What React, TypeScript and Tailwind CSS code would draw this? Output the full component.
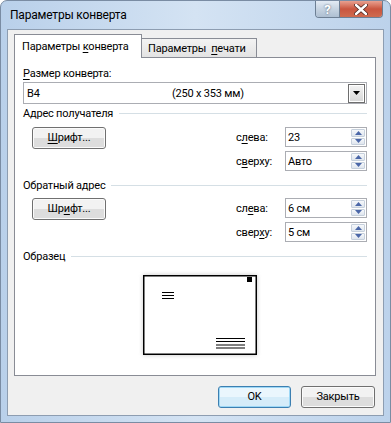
import React from "react";

const font = { fontFamily: 'Roboto, "Noto Sans", sans-serif' };

function U({ children }: { children: React.ReactNode }) {
  return <span className="underline underline-offset-2 decoration-1">{children}</span>;
}

function Spin({ value }: { value: string }) {
  return (
    <div className="flex h-[20px] w-[82px] items-stretch border border-[#abadb3] bg-white">
      <div className="flex flex-1 items-center pl-[2px] text-[11px] leading-none text-black">{value}</div>
      <div className="my-[1px] mr-[1px] flex w-[14px] flex-col gap-[1px]">
        <div className="flex flex-1 items-center justify-center rounded-[1px] border border-[#c6d0dc] bg-gradient-to-b from-[#f6f8fb] to-[#dfe6ee]">
          <svg width="7" height="4" viewBox="0 0 7 4"><path d="M0 4 L3.5 0 L7 4 Z" fill="#4b67a8" /></svg>
        </div>
        <div className="flex flex-1 items-center justify-center rounded-[1px] border border-[#c6d0dc] bg-gradient-to-b from-[#f6f8fb] to-[#dfe6ee]">
          <svg width="7" height="4" viewBox="0 0 7 4"><path d="M0 0 L7 0 L3.5 4 Z" fill="#4b67a8" /></svg>
        </div>
      </div>
    </div>
  );
}

function Btn({ children, w, focused }: { children: React.ReactNode; w: number; focused?: boolean }) {
  return (
    <div
      className={
        "relative flex h-[22px] items-center justify-center overflow-hidden rounded-[3px] border text-[11px] text-black " +
        (focused ? "border-[#3c7fb1] shadow-[inset_0_0_0_1px_#9ed8f6]" : "border-[#707070] shadow-[inset_0_0_0_1px_#fbfbfb]")
      }
      style={{ width: w }}
    >
      <div className="absolute inset-[1px] flex flex-col">
        <div className={"flex-1 " + (focused ? "bg-[#eaf6fd]" : "bg-[#f2f2f2]")} />
        <div className={"flex-1 " + (focused ? "bg-[#d5ecf9]" : "bg-[#dddddd]")} />
      </div>
      <span className="relative whitespace-nowrap">{children}</span>
    </div>
  );
}

function GroupHeader({ label, mt }: { label: string; mt: number }) {
  return (
    <div className="flex h-[15px] items-center" style={{ marginTop: mt }}>
      <span className="whitespace-nowrap text-[11px] leading-[15px] text-black">{label}</span>
      <div className="ml-[6px] h-px flex-1 bg-[#d5dfe5]" />
    </div>
  );
}

function FieldRow({ label, value }: { label: React.ReactNode; value: string }) {
  return (
    <div className="flex h-[20px] items-center">
      <div className="w-[49px] whitespace-nowrap text-[11px] leading-none text-black">{label}</div>
      <Spin value={value} />
    </div>
  );
}

function Envelope() {
  return (
    <svg width="124" height="90" viewBox="0 0 124 90" className="block">
      <defs>
        <filter id="sh" x="-20%" y="-20%" width="140%" height="140%">
          <feGaussianBlur stdDeviation="2" />
        </filter>
      </defs>
      <rect x="5" y="5" width="114" height="80" fill="#9a9a9a" opacity="0.55" filter="url(#sh)" />
      <rect x="5.75" y="5.75" width="112.5" height="78.5" fill="#fff" stroke="#000" strokeWidth="1.5" />
      <rect x="109" y="7" width="5" height="5" fill="#000" />
      <g stroke="#000" strokeWidth="1">
        <line x1="24" y1="22.5" x2="36" y2="22.5" />
        <line x1="24" y1="25.5" x2="36" y2="25.5" />
        <line x1="24" y1="28.5" x2="36" y2="28.5" />
        <line x1="78" y1="68.5" x2="107" y2="68.5" />
        <line x1="78" y1="71.5" x2="107" y2="71.5" />
        <line x1="78" y1="75" x2="107" y2="75" />
        <line x1="78" y1="78" x2="107" y2="78" />
      </g>
    </svg>
  );
}

export default function App() {
  return (
    <div
      className="relative flex h-[423px] w-[391px] flex-col overflow-hidden rounded-t-[7px] border border-[#7a8ca3] bg-gradient-to-r from-[#b9d0ea] via-[#d4e3f3] to-[#bcd2eb] tracking-[-0.2px]"
      style={font}
    >
      {/* title bar */}
      <div className="flex h-[28px] items-start">
        <div className="flex h-[28px] flex-1 items-center pl-[9px] text-[12px] text-black">
          <span className="whitespace-nowrap">Параметры конверта</span>
        </div>
        <div className="mr-[7px] flex h-[17px] overflow-hidden rounded-b-[4px] border border-t-0 border-[#6d7f94]">
          <div className="flex w-[24px] items-center justify-center border-r border-[#6d7f94] bg-gradient-to-b from-[#e3ebf4] via-[#c6d3e1] to-[#aebfd2] text-[13px] font-bold leading-none text-white [text-shadow:0_0_2px_#44546a]">
            ?
          </div>
          <div className="flex w-[42px] items-center justify-center bg-gradient-to-b from-[#e8a090] via-[#c9553f] to-[#cf6b4f]">
            <svg width="14" height="11" viewBox="0 0 14 11">
              <path d="M2 1 L12 10 M12 1 L2 10" stroke="#4a2520" strokeWidth="4" strokeLinecap="round" />
              <path d="M2 1 L12 10 M12 1 L2 10" stroke="#fff" strokeWidth="2.4" strokeLinecap="round" />
            </svg>
          </div>
        </div>
      </div>

      {/* client */}
      <div className="mx-[6px] h-[387px] border border-[#8d9db1] bg-[#f0f0f0]">
        {/* tabs */}
        <div className="ml-[6px] mt-[4px] flex h-[23px] items-end">
          <div className="relative z-10 -mb-px h-[24px] w-[128px] whitespace-nowrap border border-b-0 border-[#898c95] bg-white pl-[7px] pt-[4px] text-[11px] leading-[15px] text-black">
            <span>
              Параметры <U>к</U>онверта
            </span>
          </div>
          <div className="h-[19px] w-[115px] whitespace-nowrap border border-b-0 border-l-0 border-[#898c95] bg-gradient-to-b from-[#f3f3f3] to-[#e3e3e3] pl-[6px] pt-[2px] text-[11px] leading-[15px] text-black">
            <span>
              Параметры&nbsp; <U>п</U>ечати
            </span>
          </div>
        </div>
        {/* panel */}
        <div className="ml-[6px] flex h-[319px] w-[362px] flex-col border border-[#898c95] bg-white px-[8px]">
          <div className="mt-[8px] h-[15px] whitespace-nowrap text-[11px] leading-[15px] text-black">
            <U>Р</U>азмер конверта:
          </div>
          <div className="mt-[1px] flex h-[22px] items-center border border-[#abadb3] bg-white pl-[3px]">
            <span className="w-[145px] text-[11px] leading-none text-black">В4</span>
            <span className="flex-1 whitespace-nowrap text-[11px] leading-none text-black">(250 x 353 мм)</span>
            <div className="mr-px flex h-[19px] w-[17px] items-center justify-center border border-[#6e6e6e] bg-gradient-to-b from-[#f4f4f4] to-[#d6d6d6] shadow-[inset_0_0_0_1px_#fff]">
              <svg width="7" height="4" viewBox="0 0 7 4"><path d="M0 0 L7 0 L3.5 4 Z" fill="#000" /></svg>
            </div>
          </div>

          <GroupHeader label="Адрес получателя" mt={2} />
          <div className="mt-[6px] flex">
            <div className="ml-[9px]">
              <Btn w={74}><U>Ш</U>рифт...</Btn>
            </div>
            <div className="ml-auto mr-0 flex flex-col gap-[4px]">
              <FieldRow label={<>с<U>л</U>ева:</>} value="23" />
              <FieldRow label={<>с<U>в</U>ерху:</>} value="Авто" />
            </div>
          </div>

          <GroupHeader label="Обратный адрес" mt={7} />
          <div className="mt-[5px] flex">
            <div className="ml-[9px]">
              <Btn w={74}>Шр<U>и</U>фт...</Btn>
            </div>
            <div className="ml-auto flex flex-col gap-[4px]">
              <FieldRow label={<>сл<U>е</U>ва:</>} value="6 см" />
              <FieldRow label={<>свер<U>х</U>у:</>} value="5 см" />
            </div>
          </div>

          <GroupHeader label="Образец" mt={7} />
          <div className="ml-[115px] mt-[6px]">
            <Envelope />
          </div>
        </div>

        {/* bottom buttons */}
        <div className="mr-[8px] mt-[10px] flex justify-end gap-[10px]">
          <Btn w={73} focused>OK</Btn>
          <Btn w={74}>Закрыть</Btn>
        </div>
      </div>
    </div>
  );
}
